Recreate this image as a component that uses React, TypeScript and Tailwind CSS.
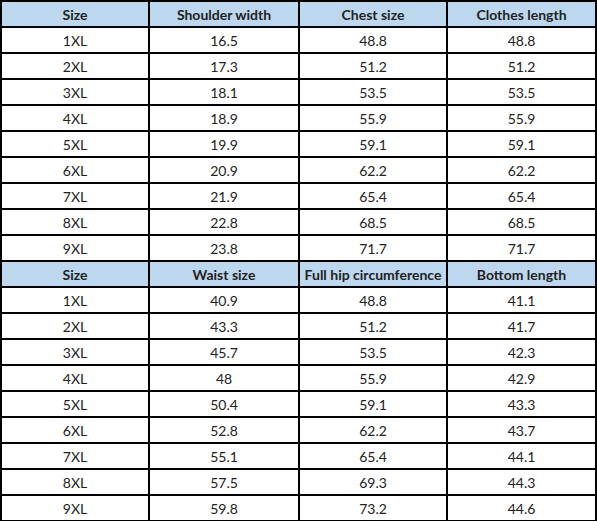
import React from "react";

const top = {
  head: ["Size", "Shoulder width", "Chest size", "Clothes length"],
  rows: [
    ["1XL", "16.5", "48.8", "48.8"],
    ["2XL", "17.3", "51.2", "51.2"],
    ["3XL", "18.1", "53.5", "53.5"],
    ["4XL", "18.9", "55.9", "55.9"],
    ["5XL", "19.9", "59.1", "59.1"],
    ["6XL", "20.9", "62.2", "62.2"],
    ["7XL", "21.9", "65.4", "65.4"],
    ["8XL", "22.8", "68.5", "68.5"],
    ["9XL", "23.8", "71.7", "71.7"],
  ],
};

const bottom = {
  head: ["Size", "Waist size", "Full hip circumference", "Bottom length"],
  rows: [
    ["1XL", "40.9", "48.8", "41.1"],
    ["2XL", "43.3", "51.2", "41.7"],
    ["3XL", "45.7", "53.5", "42.3"],
    ["4XL", "48", "55.9", "42.9"],
    ["5XL", "50.4", "59.1", "43.3"],
    ["6XL", "52.8", "62.2", "43.7"],
    ["7XL", "55.1", "65.4", "44.1"],
    ["8XL", "57.5", "69.3", "44.3"],
    ["9XL", "59.8", "73.2", "44.6"],
  ],
};

const Section = ({ head, rows }: { head: string[]; rows: string[][] }) => (
  <>
    <tr className="bg-[#bdd7ee]">
      {head.map(h => (
        <th
          key={h}
          className="h-[26px] border-2 border-black p-0 text-center text-[14px] font-bold text-[#222]"
        >
          {h}
        </th>
      ))}
    </tr>
    {rows.map(r => (
      <tr key={r[0]} className="bg-white">
        {r.map((c, i) => (
          <td
            key={i}
            className="h-[26px] border-2 border-black p-0 text-center text-[14px] text-[#222]"
          >
            {c}
          </td>
        ))}
      </tr>
    ))}
  </>
);

export default function App() {
  return (
    <div className="w-[597px] h-[521px] bg-white overflow-hidden" style={{ fontFamily: "Lato, 'Open Sans', sans-serif" }}>
      <table className="w-[595px] table-fixed border-collapse">
        <colgroup>
          <col className="w-[148px]" />
          <col className="w-[150px]" />
          <col className="w-[148px]" />
          <col className="w-[149px]" />
        </colgroup>
        <tbody>
          <Section {...top} />
          <Section {...bottom} />
        </tbody>
      </table>
    </div>
  );
}
